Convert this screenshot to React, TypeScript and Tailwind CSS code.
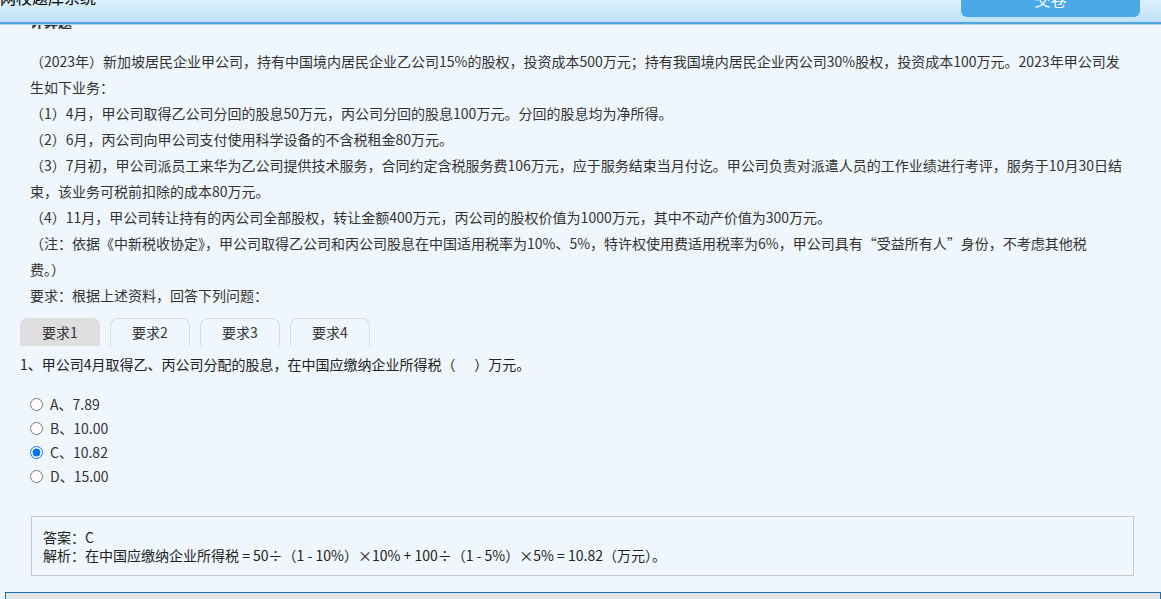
const font = { fontFamily: '"Noto Sans CJK SC", "Noto Sans", sans-serif' };

const material = [
  '（2023年）新加坡居民企业甲公司，持有中国境内居民企业乙公司15%的股权，投资成本500万元；持有我国境内居民企业丙公司30%股权，投资成本100万元。2023年甲公司发',
  '生如下业务：',
  '（1）4月，甲公司取得乙公司分回的股息50万元，丙公司分回的股息100万元。分回的股息均为净所得。',
  '（2）6月，丙公司向甲公司支付使用科学设备的不含税租金80万元。',
  '（3）7月初，甲公司派员工来华为乙公司提供技术服务，合同约定含税服务费106万元，应于服务结束当月付讫。甲公司负责对派遣人员的工作业绩进行考评，服务于10月30日结',
  '束，该业务可税前扣除的成本80万元。',
  '（4）11月，甲公司转让持有的丙公司全部股权，转让金额400万元，丙公司的股权价值为1000万元，其中不动产价值为300万元。',
  '（注：依据《中新税收协定》，甲公司取得乙公司和丙公司股息在中国适用税率为10%、5%，特许权使用费适用税率为6%，甲公司具有“受益所有人”身份，不考虑其他税',
  '费。）',
  '要求：根据上述资料，回答下列问题：',
];

const tabs = ['要求1', '要求2', '要求3', '要求4'];

const options = [
  { key: 'A', text: '7.89' },
  { key: 'B', text: '10.00' },
  { key: 'C', text: '10.82' },
  { key: 'D', text: '15.00' },
];

export default function App() {
  return (
    <div className="h-[599px] w-full overflow-hidden bg-[#eff6fe] text-[#333]" style={font}>
      {/* top bar, sits over the scrolled content */}
      <div className="relative z-10">
        <div className="flex h-[24px] items-start justify-between border-b-2 border-[#4fa5dd] bg-gradient-to-b from-[#dcf0fc] to-[#c0e2f8]">
          <div className="-mt-[15px] text-[16px] leading-[24px] text-black">网校题库系统</div>
          <div className="mr-[21px] -mt-[19px] h-[36px] w-[179px] rounded-b-[6px] bg-[#4ba9e8] text-center text-[16px] leading-[36px] text-white">
            交卷
          </div>
        </div>
        <div className="h-px bg-[#aed7f2]" />
      </div>

      <div className="px-[20px]">
        <div className="-mt-[17px] mb-[14px] pl-[10px] text-[14px] font-bold leading-[26px]">计算题</div>

        <div className="pl-[10px] text-[14px] leading-[26px]">
          {material.map((line, i) => (
            <div key={i} className="whitespace-nowrap">
              {line}
            </div>
          ))}
        </div>

        <div className="mt-[10px] flex gap-[10px]">
          {tabs.map((t, i) => (
            <div
              key={t}
              className={
                i === 0
                  ? 'h-[28px] w-[80px] rounded-t-[8px] bg-[#dedede] text-center text-[14px] leading-[28px]'
                  : 'h-[28px] w-[80px] rounded-t-[8px] border border-b-0 border-[#dcdcdc] text-center text-[14px] leading-[27px]'
              }
            >
              {t}
            </div>
          ))}
        </div>

        <div className="mt-[5px] whitespace-nowrap text-[14px] leading-[26px] text-[#222]">
          1、甲公司4月取得乙、丙公司分配的股息，在中国应缴纳企业所得税（&nbsp;&nbsp;&nbsp;&nbsp;&nbsp;&nbsp;）万元。
        </div>

        <div className="mt-[15px] pl-[10px]">
          {options.map((o) => (
            <label key={o.key} className="flex h-[24px] items-center gap-[7px] text-[14px]">
              <input
                type="radio"
                name="q1"
                defaultChecked={o.key === 'C'}
                className="m-0 h-[13px] w-[13px] accent-[#0a74f0]"
              />
              <span>
                {o.key}、{o.text}
              </span>
            </label>
          ))}
        </div>
      </div>

      <div className="ml-[31px] mr-[27px] mt-[28px] border border-[#c8c8c8] px-[11px] py-[11px] text-[14px] leading-[18px] text-[#222]">
        <div>答案：C</div>
        <div className="whitespace-nowrap">
          解析：在中国应缴纳企业所得税 = 50÷（1 - 10%）×10% + 100÷（1 - 5%）×5% = 10.82（万元）。
        </div>
      </div>

      <div className="ml-[5px] mt-[16px] h-[40px] border border-[#1e6eb5] bg-[#e2e2e2]" />
    </div>
  );
}
